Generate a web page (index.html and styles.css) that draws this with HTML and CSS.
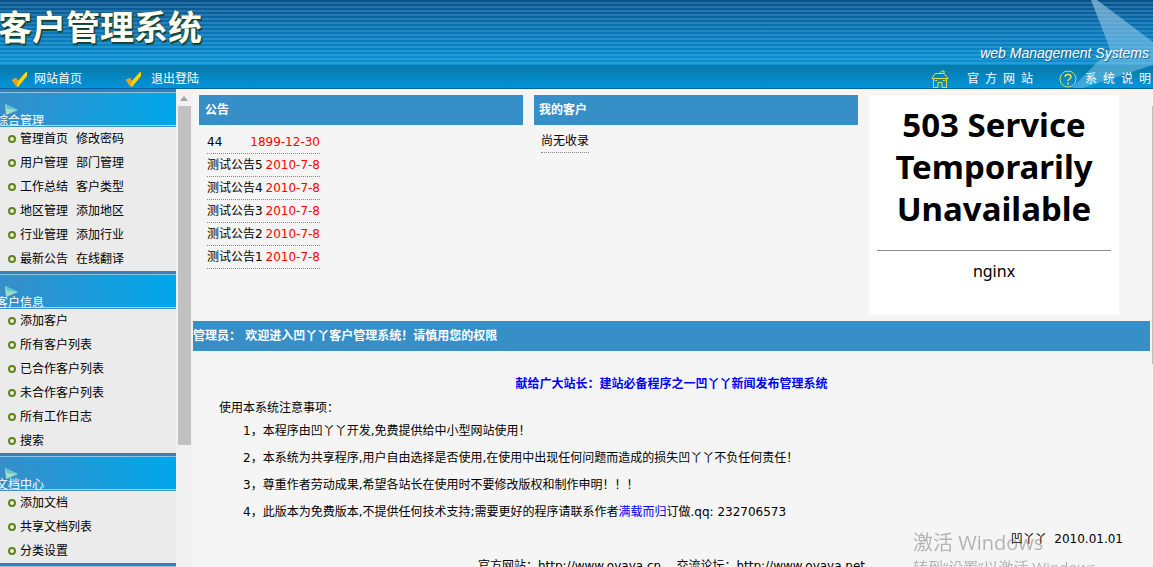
FILE: index.html
```html
<!DOCTYPE html>
<html lang="zh-CN">
<head>
<meta charset="utf-8">
<title>客户管理系统</title>
<link rel="stylesheet" href="styles.css">
</head>
<body>
<svg class="sprites" aria-hidden="true">
  <symbol id="tick" viewBox="0 0 16 16"><path d="M0 9 L4 7 L6 10 L14 1 L15 1 L15 5 L6 16 L4 15 Z" fill="#ffd800"/><path d="M0 9 L4 7 L6 10 L5 15 L4 15 Z" fill="#ff9c12"/></symbol>
  <symbol id="arrow" viewBox="0 0 13 11"><path d="M0 0 L13 6 L1 11 Z" fill="#a4dcc9"/><path d="M0 0 L13 6 L2 5 Z" fill="#5cc9d2"/></symbol>
</svg>
<header class="header">
  <svg class="star" viewBox="0 0 90 88" aria-hidden="true">
    <defs><linearGradient id="sg" x1="0" y1="0" x2="0" y2="1"><stop offset="0" stop-color="#9cc8e4" stop-opacity=".65"/><stop offset=".5" stop-color="#7fc3e8" stop-opacity=".6"/><stop offset="1" stop-color="#8fcdec" stop-opacity=".4"/></linearGradient></defs>
    <path d="M28 0 H34 L90 42 V65 L20 88 H9 L47 49 Z" fill="url(#sg)"/>
  </svg>
  <div class="banner">
    <h1 class="title">客户管理系统</h1>
    <p class="slogan">web Management Systems</p>
  </div>
  <nav class="nav">
    <a class="nav-link" href="#"><svg class="tick"><use href="#tick"/></svg>网站首页</a>
    <a class="nav-link second" href="#"><svg class="tick"><use href="#tick"/></svg>退出登陆</a>
    <a class="nav-link spaced official" href="#"><svg class="round" viewBox="0 0 18 18" fill="none" stroke="#d9e04e"><path d="M1 8.500 L4 3.500 H13 L17 8.500 Z M9 3 L11 1 H13 V4 M2.500 9 V17.500 H7 V12.500 H11 V17.500 H15.500 V9 M4 10.500 H6 M12 10.500 H14"/></svg><span>官&nbsp; 方&nbsp; 网&nbsp; 站</span></a>
    <a class="nav-link spaced" href="#"><svg class="round" viewBox="0 0 18 18" fill="none"><circle cx="9" cy="9" r="8" stroke="#cbd98a"/><path d="M6 7 C6 3.500 12 3.500 12 7 C12 9 9 9 9 11 M9 12.500 V14.500" stroke="#f2e24a" stroke-width="1.500"/></svg><span>系&nbsp; 统&nbsp; 说&nbsp; 明</span></a>
  </nav>
</header>
<div class="body">
  <aside class="sidebar">
    <section>
      <h2 class="group"><svg class="arrow"><use href="#arrow"/></svg><span>综合管理</span></h2>
      <ul class="menu">
        <li><a href="#">管理首页</a><a href="#">修改密码</a></li>
        <li><a href="#">用户管理</a><a href="#">部门管理</a></li>
        <li><a href="#">工作总结</a><a href="#">客户类型</a></li>
        <li><a href="#">地区管理</a><a href="#">添加地区</a></li>
        <li><a href="#">行业管理</a><a href="#">添加行业</a></li>
        <li><a href="#">最新公告</a><a href="#">在线翻译</a></li>
      </ul>
    </section>
    <section>
      <h2 class="group"><svg class="arrow"><use href="#arrow"/></svg><span>客户信息</span></h2>
      <ul class="menu">
        <li><a href="#">添加客户</a></li>
        <li><a href="#">所有客户列表</a></li>
        <li><a href="#">已合作客户列表</a></li>
        <li><a href="#">未合作客户列表</a></li>
        <li><a href="#">所有工作日志</a></li>
        <li><a href="#">搜索</a></li>
      </ul>
    </section>
    <section>
      <h2 class="group"><svg class="arrow"><use href="#arrow"/></svg><span>文档中心</span></h2>
      <ul class="menu">
        <li><a href="#">添加文档</a></li>
        <li><a href="#">共享文档列表</a></li>
        <li><a href="#">分类设置</a></li>
      </ul>
    </section>
    <h2 class="group"></h2>
  </aside>
  <div class="scroll" aria-hidden="true">
    <div class="scroll-up"></div>
    <div class="scroll-thumb"></div>
  </div>
  <main class="main">
    <div class="panels">
      <section>
        <h2 class="panel-title">公告</h2>
        <ul class="news">
          <li><a href="#">44</a><time>1899-12-30</time></li>
          <li><a href="#">测试公告5</a><time>2010-7-8</time></li>
          <li><a href="#">测试公告4</a><time>2010-7-8</time></li>
          <li><a href="#">测试公告3</a><time>2010-7-8</time></li>
          <li><a href="#">测试公告2</a><time>2010-7-8</time></li>
          <li><a href="#">测试公告1</a><time>2010-7-8</time></li>
        </ul>
      </section>
      <section>
        <h2 class="panel-title customers">我的客户</h2>
        <p class="empty">尚无收录</p>
      </section>
      <section class="error">
        <h2 class="error-title">503 Service Temporarily Unavailable</h2>
        <hr class="rule">
        <p class="server">nginx</p>
      </section>
    </div>
    <h2 class="welcome">管理员： 欢迎进入凹丫丫客户管理系统！请慎用您的权限</h2>
    <div class="notes">
      <p class="dedication">献给广大站长：建站必备程序之一凹丫丫新闻发布管理系统</p>
      <p class="intro">使用本系统注意事项：</p>
      <div class="rules">
        <p>1，本程序由凹丫丫开发,免费提供给中小型网站使用！</p>
        <p>2，本系统为共享程序,用户自由选择是否使用,在使用中出现任何问题而造成的损失凹丫丫不负任何责任！</p>
        <p>3，尊重作者劳动成果,希望各站长在使用时不要修改版权和制作申明！！！</p>
        <p>4，此版本为免费版本,不提供任何技术支持;需要更好的程序请联系作者<a href="#">满载而归</a>订做.qq: 232706573</p>
      </div>
      <p class="signature">凹丫丫&nbsp; 2010.01.01</p>
      <p class="links">官方网站：http://www.oyaya.cn &nbsp; &nbsp;交流论坛：http://www.oyaya.net</p>
    </div>
  </main>
  <div class="edge"></div>
</div>
<div class="activation"><p class="activation-title">激活 Windows</p><p class="activation-text">转到“设置”以激活 Windows。</p></div>
</body>
</html>
```
FILE: styles.css
```css
*, *::before { box-sizing: border-box; }
body {
  margin: 0;
  height: 100vh;
  overflow: hidden;
  display: flex;
  flex-direction: column;
  background: #f5f5f5;
  color: #000;
  font: 12px/24px "DejaVu Sans", "Noto Sans CJK SC", sans-serif;
}
h1, h2, p, ul { margin: 0; padding: 0; font-size: inherit; font-weight: normal; }
ul { list-style: none; }
a { color: inherit; text-decoration: none; }
.sprites { display: none; }

.header { position: relative; flex: none; overflow: hidden; border-bottom: 1px solid #0060a4; color: #fff; }
.star { position: absolute; top: 0; right: 0; width: 90px; height: 88px; z-index: 1; }
.banner {
  display: flex;
  justify-content: space-between;
  height: 65px;
  padding-right: 4px;
  background:
    repeating-linear-gradient(rgba(255,255,255,0) 0 2px, rgba(140,205,235,.22) 2px 4px),
    linear-gradient(#0a5289, #0b6fae 40%, #0892d4);
}
.title {
  margin-left: -2px;
  font-family: "Liberation Serif", "Noto Sans CJK SC", serif;
  font-size: 34px;
  font-weight: bold;
  line-height: 58px;
  color: #fffef4;
  text-shadow: 1px 1px 1px #173d30, -1px 0 1px #285b4d, 1px 2px 1px #174939;
}
.slogan {
  align-self: flex-end;
  position: relative;
  z-index: 2;
  font: italic 14px/24px "Liberation Sans", sans-serif;
  text-shadow: 1px 1px 1px #185a85;
}
.nav {
  display: flex;
  align-items: center;
  height: 23px;
  padding: 4px 2px 0 12px;
  background: linear-gradient(#0878a7, #0094d9);
}
.nav-link { display: flex; align-items: center; gap: 6px; position: relative; z-index: 2; }
.second { margin-left: 44px; gap: 9px; }
.spaced { gap: 8px; font-family: "Liberation Serif", "Noto Sans CJK SC", serif; white-space: nowrap; }
.official { gap: 18px; margin: 0 26px 0 auto; }
.tick { width: 16px; height: 16px; }
.round { width: 18px; height: 18px; }

.body { display: flex; flex: 1; min-height: 0; }
.sidebar { flex: none; width: 176px; overflow: hidden; background: #ebebeb; }
.group {
  display: flex;
  flex-direction: column;
  justify-content: flex-end;
  height: 38px;
  overflow: hidden;
  border-top: 3px solid #3680b9;
  border-bottom: 1px solid #3f91cb;
  background:
    linear-gradient(#8bc6e8, #8bc6e8) top / 100% 1px no-repeat,
    linear-gradient(#a8d5ee, #a8d5ee) bottom / 100% 1px no-repeat,
    linear-gradient(90deg, #378ec8, #00a8eb);
  color: #fff;
}
.group span { margin-left: -4px; height: 11px; line-height: 12px; }
.arrow { width: 13px; height: 11px; margin-left: 5px; }
.menu { padding-left: 8px; }
.menu li { display: flex; align-items: center; gap: 8px; height: 24px; line-height: 22px; }
.menu li::before { content: ""; width: 8px; height: 8px; margin-right: -4px; border: 2px solid #66801a; border-radius: 4px; background: #e5f1e4; }

.scroll { flex: none; width: 17px; padding: 0 2px; background: #f1f1f1; }
.scroll-up { width: 0; margin: 7px 2px 5px; border: 4px solid transparent; border-top: 0; border-bottom: 5px solid #a3a3a3; }
.scroll-thumb { height: 339px; background: #c1c1c1; }

.main { flex: 1; min-width: 0; }
.panels {
  display: grid;
  grid-template-columns: 1fr 1fr 250px;
  gap: 11px;
  padding: 6px 33px 6px 6px;
}
.panel-title { padding-left: 6px; background: #378fc7; color: #fff; font-weight: bold; line-height: 30px; }
.customers { padding-left: 5px; }
.news { width: 113px; margin: 6px 8px; }
.news li { display: flex; justify-content: space-between; border-bottom: 1px dotted #888; line-height: 22px; }
.news time { color: #f00; }
.empty { width: fit-content; margin: 5px 7px; border-bottom: 1px dotted #888; line-height: 22px; }
.error { min-height: 220px; padding: 9px 8px; background: #fff; text-align: center; font-family: "Noto Sans", sans-serif; }
.error-title { font-size: 33px; font-weight: bold; line-height: 42px; }
.rule { margin: 20px 0 8px; border: 0; border-top: 1px solid #8a8a8a; }
.server { font-size: 16px; }

.welcome { margin-right: 2px; background: #378fc7; color: #fff; font-weight: bold; line-height: 30px; }
.notes { padding: 21px 2px 0 0; }
.dedication { color: #00f; font-weight: bold; text-align: center; }
.intro { padding-left: 26px; }
.rules { margin-top: -2px; padding-left: 50px; line-height: 27px; }
.rules a { color: #00f; }
.signature { padding-right: 27px; text-align: right; line-height: 27px; }
.links { text-align: center; line-height: 27px; }
.edge { flex: none; width: 1px; height: 258px; margin-top: 17px; background: #bdbdbd; }

.activation {
  position: fixed;
  right: 0;
  bottom: -12px;
  width: 240px;
  color: rgba(100,100,100,.45);
  font-family: "Open Sans", "Noto Sans CJK SC", sans-serif;
  font-weight: 300;
}
.activation-title { font-size: 20px; }
.activation-text { font-size: 15px; }
```
